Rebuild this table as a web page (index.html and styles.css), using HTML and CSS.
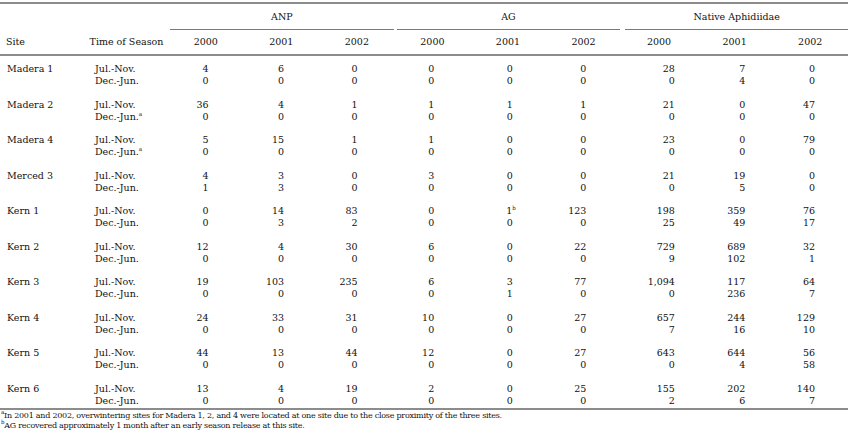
FILE: index.html
```html
<!DOCTYPE html>
<html lang="en">
<head>
<meta charset="utf-8">
<title>Parasitoid recoveries by site</title>
<link rel="stylesheet" href="styles.css">
</head>
<body>
<div class="page">
<table class="data">
  <colgroup>
    <col class="c-site"><col class="c-time">
    <col class="c-num"><col class="c-num"><col class="c-num">
    <col class="c-num"><col class="c-num"><col class="c-num">
    <col class="c-num"><col class="c-num"><col class="c-num">
  </colgroup>
  <thead>
    <tr class="groups">
      <th></th><th></th>
      <th colspan="3"><div class="glabel">ANP</div></th>
      <th colspan="3"><div class="glabel">AG</div></th>
      <th colspan="3" class="last"><div class="glabel">Native Aphidiidae</div></th>
    </tr>
    <tr class="years">
      <th class="site">Site</th><th class="time">Time of Season</th>
      <th>2000</th><th>2001</th><th>2002</th>
      <th>2000</th><th>2001</th><th>2002</th>
      <th>2000</th><th>2001</th><th>2002</th>
    </tr>
  </thead>
  <tbody>
    <tr><td class="site">Madera 1</td><td class="time">Jul.-Nov.</td><td>4</td><td>6</td><td>0</td><td>0</td><td>0</td><td>0</td><td>28</td><td>7</td><td>0</td></tr>
    <tr><td class="site"></td><td class="time">Dec.-Jun.</td><td>0</td><td>0</td><td>0</td><td>0</td><td>0</td><td>0</td><td>0</td><td>4</td><td>0</td></tr>
  </tbody>
  <tbody>
    <tr><td class="site">Madera 2</td><td class="time">Jul.-Nov.</td><td>36</td><td>4</td><td>1</td><td>1</td><td>1</td><td>1</td><td>21</td><td>0</td><td>47</td></tr>
    <tr><td class="site"></td><td class="time">Dec.-Jun.<sup>a</sup></td><td>0</td><td>0</td><td>0</td><td>0</td><td>0</td><td>0</td><td>0</td><td>0</td><td>0</td></tr>
  </tbody>
  <tbody>
    <tr><td class="site">Madera 4</td><td class="time">Jul.-Nov.</td><td>5</td><td>15</td><td>1</td><td>1</td><td>0</td><td>0</td><td>23</td><td>0</td><td>79</td></tr>
    <tr><td class="site"></td><td class="time">Dec.-Jun.<sup>a</sup></td><td>0</td><td>0</td><td>0</td><td>0</td><td>0</td><td>0</td><td>0</td><td>0</td><td>0</td></tr>
  </tbody>
  <tbody>
    <tr><td class="site">Merced 3</td><td class="time">Jul.-Nov.</td><td>4</td><td>3</td><td>0</td><td>3</td><td>0</td><td>0</td><td>21</td><td>19</td><td>0</td></tr>
    <tr><td class="site"></td><td class="time">Dec.-Jun.</td><td>1</td><td>3</td><td>0</td><td>0</td><td>0</td><td>0</td><td>0</td><td>5</td><td>0</td></tr>
  </tbody>
  <tbody>
    <tr><td class="site">Kern 1</td><td class="time">Jul.-Nov.</td><td>0</td><td>14</td><td>83</td><td>0</td><td>1<sup class="hang">b</sup></td><td>123</td><td>198</td><td>359</td><td>76</td></tr>
    <tr><td class="site"></td><td class="time">Dec.-Jun.</td><td>0</td><td>3</td><td>2</td><td>0</td><td>0</td><td>0</td><td>25</td><td>49</td><td>17</td></tr>
  </tbody>
  <tbody>
    <tr><td class="site">Kern 2</td><td class="time">Jul.-Nov.</td><td>12</td><td>4</td><td>30</td><td>6</td><td>0</td><td>22</td><td>729</td><td>689</td><td>32</td></tr>
    <tr><td class="site"></td><td class="time">Dec.-Jun.</td><td>0</td><td>0</td><td>0</td><td>0</td><td>0</td><td>0</td><td>9</td><td>102</td><td>1</td></tr>
  </tbody>
  <tbody>
    <tr><td class="site">Kern 3</td><td class="time">Jul.-Nov.</td><td>19</td><td>103</td><td>235</td><td>6</td><td>3</td><td>77</td><td>1,094</td><td>117</td><td>64</td></tr>
    <tr><td class="site"></td><td class="time">Dec.-Jun.</td><td>0</td><td>0</td><td>0</td><td>0</td><td>1</td><td>0</td><td>0</td><td>236</td><td>7</td></tr>
  </tbody>
  <tbody>
    <tr><td class="site">Kern 4</td><td class="time">Jul.-Nov.</td><td>24</td><td>33</td><td>31</td><td>10</td><td>0</td><td>27</td><td>657</td><td>244</td><td>129</td></tr>
    <tr><td class="site"></td><td class="time">Dec.-Jun.</td><td>0</td><td>0</td><td>0</td><td>0</td><td>0</td><td>0</td><td>7</td><td>16</td><td>10</td></tr>
  </tbody>
  <tbody>
    <tr><td class="site">Kern 5</td><td class="time">Jul.-Nov.</td><td>44</td><td>13</td><td>44</td><td>12</td><td>0</td><td>27</td><td>643</td><td>644</td><td>56</td></tr>
    <tr><td class="site"></td><td class="time">Dec.-Jun.</td><td>0</td><td>0</td><td>0</td><td>0</td><td>0</td><td>0</td><td>0</td><td>4</td><td>58</td></tr>
  </tbody>
  <tbody class="final">
    <tr><td class="site">Kern 6</td><td class="time">Jul.-Nov.</td><td>13</td><td>4</td><td>19</td><td>2</td><td>0</td><td>25</td><td>155</td><td>202</td><td>140</td></tr>
    <tr><td class="site"></td><td class="time">Dec.-Jun.</td><td>0</td><td>0</td><td>0</td><td>0</td><td>0</td><td>0</td><td>2</td><td>6</td><td>7</td></tr>
  </tbody>
</table>
<div class="notes">
  <p><sup>a</sup>In 2001 and 2002, overwintering sites for Madera 1, 2, and 4 were located at one site due to the close proximity of the three sites.</p>
  <p><sup>b</sup>AG recovered approximately 1 month after an early season release at this site.</p>
</div>
</div>
</body>
</html>
```

FILE: styles.css
```css
html, body {
  margin: 0;
  padding: 0;
  background: #ffffff;
}

body {
  font-family: "DejaVu Serif", "Liberation Serif", serif;
  font-size: 9.5px;
  color: #111111;
}

.page {
  padding: 2px 5px 0 0;
  width: 848px;
}

.data {
  width: 848px;
  table-layout: fixed;
  border-collapse: separate;
  border-spacing: 0;
  border-top: 2px solid #8c8c8c;
  border-bottom: 2px solid #8c8c8c;
}

.c-site { width: 85px; }
.c-time { width: 83px; }

.data th,
.data td {
  padding: 0;
  line-height: 12px;
  font-weight: normal;
  white-space: nowrap;
}

/* group header row */
.groups th {
  padding-top: 7px;
  text-align: center;
}

.glabel {
  margin: 0 1px 0 2px;
  padding-bottom: 6px;
  border-bottom: 1px solid #7a7a7a;
}

.groups th.last .glabel {
  margin-right: 0;
  margin-left: 4px;
}

/* year header row */
.years th {
  padding-top: 6px;
  padding-bottom: 6px;
  border-bottom: 2px solid #8c8c8c;
  text-align: center;
}

.years th.site {
  text-align: left;
  padding-left: 6px;
}

.years th.time {
  text-align: center;
}

/* body */
.data td {
  text-align: right;
}

.data td.site {
  text-align: left;
  padding-left: 7px;
}

.data td.time {
  text-align: left;
  padding-left: 10px;
}

.data tbody tr:first-child td {
  padding-top: 11.5px;
}

.data tbody:first-of-type tr:first-child td {
  padding-top: 7px;
}

.data tbody.final tr:last-child td {
  padding-bottom: 1px;
}

.data td:nth-child(3)  { padding-right: 35px; }
.data td:nth-child(4)  { padding-right: 35px; }
.data td:nth-child(5)  { padding-right: 37px; }
.data td:nth-child(6)  { padding-right: 36px; }
.data td:nth-child(7)  { padding-right: 33px; }
.data td:nth-child(8)  { padding-right: 35px; }
.data td:nth-child(9)  { padding-right: 22px; }
.data td:nth-child(10) { padding-right: 27px; }
.data td:nth-child(11) { padding-right: 33px; }

sup {
  font-size: 5.5px;
  line-height: 0;
  vertical-align: 4px;
}

sup.hang {
  margin-right: -3px;
}

.notes {
  margin-top: 1px;
  font-size: 8px;
  line-height: 10px;
  letter-spacing: -0.25px;
}

.notes p {
  margin: 0;
  padding-left: 1px;
}
```
